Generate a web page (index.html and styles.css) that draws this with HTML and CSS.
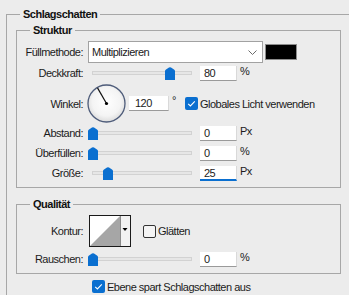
FILE: index.html
```html
<!DOCTYPE html>
<html lang="de">
<head>
<meta charset="utf-8">
<title>Schlagschatten</title>
<link rel="stylesheet" href="styles.css">
</head>
<body>
<fieldset class="group outer">
  <legend>Schlagschatten</legend>

  <fieldset class="group inner struktur">
    <legend>Struktur</legend>

    <div class="row row-blend">
      <span class="lbl">Füllmethode:</span>
      <div class="select">
        <span class="select-text">Multiplizieren</span>
        <svg class="chev" width="9" height="5" viewBox="0 0 9 5"><path d="M0.5 0.5 L4.5 4.5 L8.5 0.5" fill="none" stroke="#6b6b6b" stroke-width="1"/></svg>
      </div>
      <div class="swatch"></div>
    </div>

    <div class="row">
      <span class="lbl">Deckkraft:</span>
      <div class="slider">
        <div class="track"></div>
        <svg class="thumb" style="left:77px" width="10" height="13" viewBox="0 0 10 13"><path d="M0 4 Q0 3 1 2.5 L4 0.6 Q5 0 6 0.6 L9 2.5 Q10 3 10 4 V13 H0 Z" fill="#0a6fd0"/></svg>
      </div>
      <div class="num">80</div>
      <span class="unit">%</span>
    </div>

    <div class="row row-angle">
      <span class="lbl">Winkel:</span>
      <svg class="dial" width="39" height="39" viewBox="0 0 39 39">
        <defs>
          <radialGradient id="dg" cx="50%" cy="45%" r="55%">
            <stop offset="0%" stop-color="#ffffff"/>
            <stop offset="70%" stop-color="#f4f4f4"/>
            <stop offset="100%" stop-color="#dcdcdc"/>
          </radialGradient>
        </defs>
        <circle cx="19.5" cy="19.5" r="18.5" fill="url(#dg)" stroke="#4e5c7a" stroke-width="1.3"/>
        <line x1="19.5" y1="19.5" x2="10.5" y2="3.9" stroke="#111" stroke-width="1.2"/>
        <circle cx="19.5" cy="19.5" r="1.6" fill="#000"/>
      </svg>
      <div class="num num-angle">120</div>
      <span class="deg">°</span>
      <span class="check on"><svg width="13" height="13" viewBox="0 0 13 13"><path d="M3.2 6.8 L5.4 9 L9.8 4.4" fill="none" stroke="#fff" stroke-width="1.1"/></svg></span>
      <span class="check-lbl">Globales Licht verwenden</span>
    </div>

    <div class="row">
      <span class="lbl">Abstand:</span>
      <div class="slider">
        <div class="track"></div>
        <svg class="thumb" style="left:0px" width="10" height="13" viewBox="0 0 10 13"><path d="M0 4 Q0 3 1 2.5 L4 0.6 Q5 0 6 0.6 L9 2.5 Q10 3 10 4 V13 H0 Z" fill="#0a6fd0"/></svg>
      </div>
      <div class="num">0</div>
      <span class="unit">Px</span>
    </div>

    <div class="row">
      <span class="lbl">Überfüllen:</span>
      <div class="slider">
        <div class="track"></div>
        <svg class="thumb" style="left:0px" width="10" height="13" viewBox="0 0 10 13"><path d="M0 4 Q0 3 1 2.5 L4 0.6 Q5 0 6 0.6 L9 2.5 Q10 3 10 4 V13 H0 Z" fill="#0a6fd0"/></svg>
      </div>
      <div class="num">0</div>
      <span class="unit">%</span>
    </div>

    <div class="row">
      <span class="lbl">Größe:</span>
      <div class="slider">
        <div class="track"></div>
        <svg class="thumb" style="left:15px" width="10" height="13" viewBox="0 0 10 13"><path d="M0 4 Q0 3 1 2.5 L4 0.6 Q5 0 6 0.6 L9 2.5 Q10 3 10 4 V13 H0 Z" fill="#0a6fd0"/></svg>
      </div>
      <div class="num focused">25</div>
      <span class="unit">Px</span>
    </div>
  </fieldset>

  <fieldset class="group inner qual">
    <legend>Qualität</legend>

    <div class="row row-contour">
      <span class="lbl">Kontur:</span>
      <svg class="contour" width="42" height="32" viewBox="0 0 42 32">
        <rect x="0.5" y="0.5" width="41" height="31" fill="#ffffff" stroke="#1a1a1a"/>
        <rect x="31" y="1" width="10" height="30" fill="#f2f2f2"/>
        <polygon points="1,31 31,1 31,31" fill="#a6a6a6"/>
        <line x1="31.5" y1="1" x2="31.5" y2="31" stroke="#8a8a8a"/>
        <polygon points="33.5,13 38.5,13 36,16" fill="#000"/>
      </svg>
      <span class="check off"></span>
      <span class="check-lbl">Glätten</span>
    </div>

    <div class="row row-noise">
      <span class="lbl">Rauschen:</span>
      <div class="slider">
        <div class="track"></div>
        <svg class="thumb" style="left:0px" width="10" height="13" viewBox="0 0 10 13"><path d="M0 4 Q0 3 1 2.5 L4 0.6 Q5 0 6 0.6 L9 2.5 Q10 3 10 4 V13 H0 Z" fill="#0a6fd0"/></svg>
      </div>
      <div class="num">0</div>
      <span class="unit">%</span>
    </div>
  </fieldset>

  <div class="row row-knock">
    <span class="check on"><svg width="13" height="13" viewBox="0 0 13 13"><path d="M3.2 6.8 L5.4 9 L9.8 4.4" fill="none" stroke="#fff" stroke-width="1.1"/></svg></span>
    <span class="check-lbl">Ebene spart Schlagschatten aus</span>
  </div>
</fieldset>
</body>
</html>
```

FILE: styles.css
```css
* {
  box-sizing: border-box;
}

html,
body {
  margin: 0;
  padding: 0;
}

body {
  width: 349px;
  height: 295px;
  overflow: hidden;
  background: #ececec;
  font-family: "Liberation Sans", Arial, sans-serif;
  font-size: 11px;
  line-height: 14px;
  letter-spacing: -0.5px;
  color: #1b1b1b;
}

.group {
  margin: 0;
  padding: 0;
  border: 1px solid #a7a7a7;
  min-width: 0;
}

.group > legend {
  margin-left: 13px;
  padding: 0 3px;
  font-weight: bold;
  line-height: 14px;
  color: #111;
}

.outer {
  margin-top: 7px;
  margin-left: 6px;
  width: 343px;
  border-right: 0;
  border-bottom: 0;
}

.inner {
  width: 325px;
  margin-left: 9px;
}

.struktur {
  margin-top: 2px;
  padding: 4px 0 4px;
}

.qual {
  margin-top: 9px;
  padding: 4px 0 4px;
}

.row {
  display: flex;
  align-items: center;
  height: 20px;
}

.lbl {
  flex: none;
  width: 66px;
  text-align: right;
}

/* blend mode row */
.row-blend {
  height: 22px;
}

.select {
  flex: none;
  display: flex;
  align-items: center;
  justify-content: space-between;
  width: 175px;
  height: 22px;
  margin-left: 5px;
  padding: 0 5px 0 3px;
  background: #fff;
  border: 1px solid #a2a2a2;
}

.chev {
  display: block;
}

.swatch {
  flex: none;
  width: 32px;
  height: 16px;
  margin-left: 2px;
  background: #000;
  border: 1px solid #8c8c8c;
}

/* sliders */
.slider {
  position: relative;
  flex: none;
  display: flex;
  align-items: center;
  width: 104px;
  height: 13px;
  margin-left: 5px;
}

.track {
  width: 100px;
  height: 4px;
  margin-left: 4px;
  background: #e6e6e6;
  border: 1px solid #d2d2d2;
}

.thumb {
  position: absolute;
  top: 0;
  display: block;
}

.num {
  flex: none;
  width: 37px;
  height: 15px;
  margin-left: 8px;
  padding-left: 4px;
  line-height: 15px;
  background: #fff;
  border-bottom: 1px solid #9a9a9a;
  border-right: 1px solid #d9d9d9;
}

.num.focused {
  border-bottom: 2px solid #0a6fd0;
  line-height: 14px;
}

.unit {
  flex: none;
  margin-left: 3px;
  margin-bottom: 4px;
}

/* angle row */
.row-angle {
  height: 39px;
  margin-top: 1px;
}

.dial {
  flex: none;
  display: block;
  margin-left: 4px;
}

.num-angle {
  width: 40px;
  margin-left: 3px;
  padding-left: 6px;
}

.deg {
  flex: none;
  width: 16px;
  padding-left: 3px;
  margin-bottom: 8px;
}

.check {
  flex: none;
  width: 13px;
  height: 13px;
  border-radius: 2px;
}

.check svg {
  display: block;
}

.check.on {
  background: #0a6fd0;
}

.check.off {
  border: 1px solid #333;
  background: #f4f4f4;
}

.check-lbl {
  flex: none;
  margin-left: 2px;
}

/* quality */
.row-contour {
  height: 32px;
}

.contour {
  flex: none;
  display: block;
  margin-left: 6px;
}

.row-contour .check {
  margin-left: 12px;
}

.row-noise {
  margin-top: 2px;
}

.row-knock {
  height: 19px;
  padding-top: 2px;
  margin-top: 2px;
  margin-left: 85px;
}
```
